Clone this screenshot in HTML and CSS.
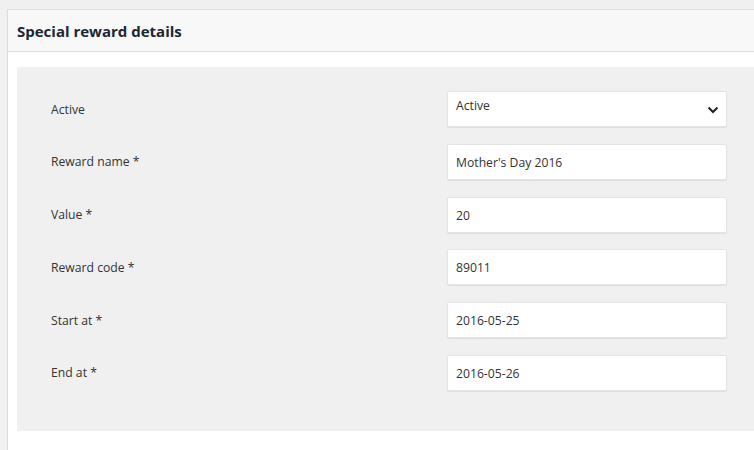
FILE: index.html
```html
<!DOCTYPE html>
<html>
<head>
<meta charset="utf-8">
<link rel="stylesheet" href="styles.css">
</head>
<body>
<div class="card">
  <div class="card-header">Special reward details</div>
  <div class="card-body">
    <div class="panel">
      <div class="row">
        <div class="label">Active</div>
        <div class="field select"><span class="select-text">Active</span>
          <svg class="chev" width="12" height="8" viewBox="0 0 12 8"><path d="M1.5 1.5 L6 6 L10.5 1.5" fill="none" stroke="#222" stroke-width="2"/></svg>
        </div>
      </div>
      <div class="row">
        <div class="label">Reward name *</div>
        <div class="field">Mother's Day 2016</div>
      </div>
      <div class="row">
        <div class="label">Value *</div>
        <div class="field">20</div>
      </div>
      <div class="row">
        <div class="label">Reward code *</div>
        <div class="field">89011</div>
      </div>
      <div class="row">
        <div class="label">Start at *</div>
        <div class="field">2016-05-25</div>
      </div>
      <div class="row">
        <div class="label">End at *</div>
        <div class="field">2016-05-26</div>
      </div>
    </div>
  </div>
</div>
</body>
</html>
```

FILE: styles.css
```css
html, body {
  margin: 0;
  padding: 0;
  background: #f0f0f0;
  font-family: "Open Sans", "Noto Sans", sans-serif;
  color: #333;
  overflow: hidden;
}
body {
  padding: 9px 0 0 7px;
  height: 450px;
  box-sizing: border-box;
}
.card {
  background: #fff;
  border-left: 1px solid #dcdcdc;
  border-top: 1px solid #dcdcdc;
  height: 100%;
  box-sizing: border-box;
}
.card-header {
  height: 42px;
  box-sizing: border-box;
  background: #f8f8f8;
  border-bottom: 1px solid #dedede;
  padding: 11px 0 0 9px;
  font-size: 15px;
  font-weight: 700;
  color: #1c2733;
  line-height: 20px;
}
.card-body {
  padding: 15px 0 0 9px;
}
.panel {
  background: #f0f0f0;
  padding: 24px 0 40px 34px;
  display: flex;
  flex-direction: column;
  gap: 16.8px;
}
.row {
  display: flex;
  align-items: center;
  height: 36px;
}
.label {
  width: 396px;
  font-size: 12.2px;
  color: #333;
}
.field {
  width: 280px;
  height: 36px;
  box-sizing: border-box;
  background: #fff;
  border: 1px solid #e4e4e4;
  border-radius: 2px;
  box-shadow: 0 1px 1px rgba(0,0,0,0.08);
  padding: 0 8px;
  font-size: 12.2px;
  line-height: 35px;
  color: #333;
}
.select {
  display: flex;
  justify-content: space-between;
  align-items: flex-start;
  padding-right: 7px;
}
.select-text {
  line-height: 14px;
  padding-top: 7px;
}
.chev {
  margin-top: 14px;
}
```
